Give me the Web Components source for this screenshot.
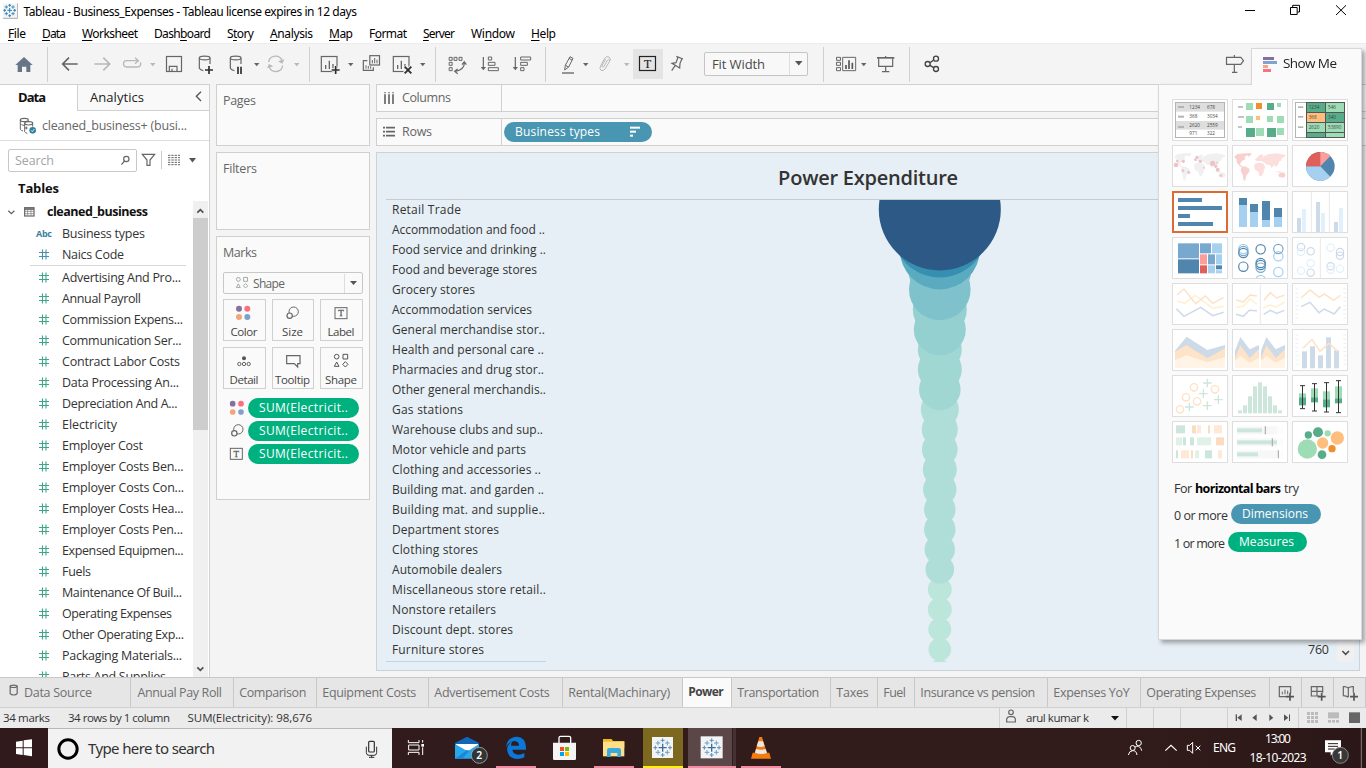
<!DOCTYPE html>
<html lang="en">
<head>
<meta charset="utf-8">
<title>Tableau - Business_Expenses</title>
<style>
html,body{margin:0;height:100%;overflow:hidden;background:#f4f4f4}
body{font-family:"Open Sans","Noto Sans",sans-serif;font-size:12px;color:#333}
</style>
</head>
<body>
<tableau-desktop></tableau-desktop>
<script>
const define = (name, css, html, setup) => customElements.define(name, class extends HTMLElement {
  connectedCallback() {
    if (this.shadowRoot) return;
    const root = this.attachShadow({mode: 'open'});
    root.innerHTML = `<style>*{box-sizing:border-box}svg{display:block;flex:none}${css}</style>` + (typeof html === 'function' ? html(this) : html);
    if (setup) setup(this, root);
  }
});

/* A one-line label that tracks its letters to fill a given width. */
define('fit-text', `:host{display:inline-block;white-space:nowrap;flex:none;line-height:1.3;padding-top:1px}span{display:inline-block;white-space:nowrap}`,
  '<span><slot></slot></span>', (el, root) => {
    const w = parseFloat(el.getAttribute('w'));
    if (!w) return;
    const span = root.querySelector('span');
    const n = el.textContent.length;
    const natural = span.getBoundingClientRect().width;
    el.style.width = w + 'px';
    span.style.letterSpacing = ((w - natural) / Math.max(1, n - 1)).toFixed(3) + 'px';
  });
const T = (w, s, cls = '') => `<fit-text w="${w}" class="${cls}">${s}</fit-text>`;

/* Icons share a grid of three units to one pixel. */
const art = (x, y, w, h, body, cls = '') =>
  `<svg class="${cls}" width="${w}" height="${h}" viewBox="${x} ${y} ${w * 3} ${h * 3}" fill="none" stroke="#666" stroke-width="3.6">${body}</svg>`;
const fill = (c, d) => `<path d="${d}" fill="${c}" stroke="none"/>`;
const box = (x, y, w, h, c) => `<rect x="${x}" y="${y}" width="${w}" height="${h}" fill="${c}" stroke="none"/>`;
const dot = (x, y, r, c) => `<circle cx="${x}" cy="${y}" r="${r}" fill="${c}" stroke="none"/>`;
const ring = (x, y, r, c, s = 3) => `<circle cx="${x}" cy="${y}" r="${r}" stroke="${c}" stroke-width="${s}"/>`;
const line = (d, c = '#666', s = 3.6) => `<path d="${d}" stroke="${c}" stroke-width="${s}"/>`;

const cross = (x, y, s, c) => `<path d="M${x - s} ${y}h${2 * s}M${x} ${y - s}v${2 * s}" stroke="${c}" stroke-width="${s > 8 ? 4 : 3}"/>`;
const tableauMark = (x, y, k) => cross(x, y, 12 * k, '#3b6e9c') +
  cross(x, y - 22 * k, 6 * k, '#5a8fb8') + cross(x, y + 22 * k, 6 * k, '#5a8fb8') +
  cross(x - 22 * k, y, 6 * k, '#5a8fb8') + cross(x + 22 * k, y, 6 * k, '#5a8fb8') +
  [[-1,-1],[1,-1],[-1,1],[1,1]].map(([a, b]) => cross(x + a * 14 * k, y + b * 14 * k, 7 * k, '#6f9fc4')).join('');

define('title-bar', `:host{display:flex;height:23px;background:#fff;align-items:flex-start;color:#000;font:12px "Noto Sans",sans-serif}
  .name{margin:3px 0 0 5.500px;line-height:16px}.sp{flex:1}.logo{margin:3px 0 0 3px}`,
  art(9, 9, 15, 16, box(9, 10, 43, 44, '#f4f4f4') + line('M9 55H53V10', '#aaa', 3) + cross(29, 31, 7, '#2c7fb0') + cross(29, 16, 4, '#2c7fb0') + cross(29, 47, 4, '#2c7fb0') + cross(14, 31, 4, '#2c7fb0') + cross(44, 31, 4, '#2c7fb0') + cross(19, 21, 5, '#3f8fc0') + cross(39, 21, 5, '#3f8fc0') + cross(19, 41, 5, '#3f8fc0') + cross(39, 41, 5, '#3f8fc0'), 'logo') +
  T(333.5, 'Tableau - Business_Expenses - Tableau license expires in 12 days', 'name') + '<span class="sp"></span>' +
  art(210, 0, 146, 22, line('M285 31.5h30', '#000', 3) + line('M421.500 22.500h20v21h-20zM428 22v-6h20.500v20h-6', '#000', 3) + line('M558 16l30 29M588 16l-30 29', '#000', 3)));

define('menu-bar', `:host{display:flex;height:20px;background:#fff;gap:16px;padding:2px 0 0 8px;color:#000;font:12px "Noto Sans",sans-serif}
  u{text-underline-offset:2px}`,
  [[18, '<u>F</u>ile'], [24, '<u>D</u>ata'], [56, '<u>W</u>orksheet'], [57, 'Dash<u>b</u>oard'], [27, 'S<u>t</u>ory'], [43, '<u>A</u>nalysis'], [24, '<u>M</u>ap'], [38, 'F<u>o</u>rmat'], [32, '<u>S</u>erver'], [44, 'Wi<u>n</u>dow'], [25, '<u>H</u>elp']].map(([w, s]) => T(w, s)).join(''));

const G = '#b8b8b8', K = '#2e2e2e';
const cylinder = x => `<ellipse cx="${x}" cy="174" rx="16" ry="5.500"/>` + line(`M${x - 16} 174v31q3 6 12 7M${x + 16} 174v18`);
const sheet = x => `<rect x="${x}" y="169.500" width="47" height="45"/>` + line(`M${x + 13} 207v-12M${x + 24} 207v-25M${x + 35} 207v-15`, '#666', 4);
/* Toolbar items: gap before the item, drawing. */
const tool = (gap, x, body) => art(x, 156, 24, 24, body).replace('<svg', `<svg style="margin:8px 0 0 ${gap}px"`);
const drop = (gap, c = '#666') => `<svg width="9" height="4" style="margin:19px 0 0 ${gap}px"><path d="M2 0h5.500L4.750 3.200z" fill="${c}"/></svg>`;
const bar = gap => `<i style="margin-left:${gap}px"></i>`;

define('tool-bar', `:host{display:flex;height:41px;background:#f4f4f4;border-top:1px solid #ececec;align-items:flex-start}
  i{flex:none;width:1px;height:35px;margin-top:3px;background:#d0d0d0}
  .on{flex:none;margin:5px 0 0 2px;background:#e4e4e4;width:30px;height:30px}
  .fit{flex:none;display:flex;margin:8px 0 0 14px;width:104px;height:24px;border:1px solid #c4c4c4;border-radius:2px;background:#f8f8f8;font-size:13px;color:#4a4a4a;padding:0 0 1px 7px;align-items:center}
  .fit b{width:1px;height:22px;background:#ddd;margin-left:24px}.fit svg{margin-left:5px}`,
  tool(12, 36, fill('#667587', 'M72 171L98 195H91V216H79V200H66V216H53V195H46z')) + bar(11) +
  tool(10, 174, line('M233 192H190M207 173L188 192l19 19', '#666', 5)) +
  tool(8, 270, line('M283 192H327M310 173l19 19-19 19', G, 5)) +
  tool(6, 360, line('M414 182H380a9.500 9.500 0 0 0 0 19H412a9.500 9.500 0 0 0 9-14M405 173l10 9-10 9', G, 4)) + drop(4, G) +
  tool(5, 486, '<rect x="499.500" y="169.500" width="45" height="45"/>' + line('M508 214v-15h23v15M516 206v8')) +
  tool(8, 582, cylinder(614) + line('M627 198v24M615 210h24', K, 5)) +
  tool(6, 672, cylinder(707) + line('M714 200v22M723 200v22', K, 5)) + drop(4) +
  tool(3, 792, line('M806 186a21 21 0 0 1 40-5M848 197a21 21 0 0 1-40 5', G, 4) + fill(G, 'M853 178l-6 13-13-7zM801 205l6-13 13 7z')) + drop(4, G) + bar(8) +
  tool(8, 954, sheet(964) + line('M1007 198v24M995 210h24', '#f4f4f4', 11) + line('M1007 198v24M995 210h24', K, 5)) + drop(4) +
  tool(5, 450, '<rect x="479.500" y="167" width="29" height="28"/>' + line('M472 182H460v29h30v-9') + line('M487 190v-10M494 190v-16M501 190v-11M468 206v-10M475 206v-8M482 206v-7', '#666', 3)) +
  tool(6, 540, sheet(550) + line('M583 199l21 20M604 199l-21 20', '#f4f4f4', 10) + line('M584 200l20 20M604 200l-20 20', K, 5.5)) + drop(4) + bar(8) +
  tool(10, 708, '<path d="M717.500 172h9v9h-9zM732 172h9v9h-9zM747 172h9v9h-9zM717.500 187h9v9h-9zM717.500 203h9v9h-9z" stroke-width="3"/>' + line('M763 189c0 14-10 22-27 25M756 194l7-9 6 9M743 207l-9 7 9 7')) +
  tool(7, 801, line('M820 171v34') + fill('#666', 'M812 201h16l-8 10z') + '<path d="M835 171h10v9h-10zM835 187h20v9h-20zM835 203h30v9h-30z" stroke-width="3"/>') +
  tool(9, 900, line('M916 171v34') + fill('#666', 'M908 201h16l-8 10z') + '<path d="M932 171h30v9h-30zM932 187h20v9h-20zM932 203h10v9h-10z" stroke-width="3"/>') + bar(11) +
  tool(11, 1041, line('M1056 219h36', '#666', 4) + line('M1066 196l14-26 9 5-13 26-12 9zM1066 196l10 5M1077 175l9 5', '#666', 3)) + drop(0) +
  tool(3, -21, line('M13 198l9-17q3-4 6-1q2 3-1 7L15 207q-5 7-12 4q-6-5-1-13L14 175q6-8 13-4q7 5 2 13M13 198q-3 5-6 3q-2-2 0-6l10-18', G, 3)) + drop(5, G) +
  art(99, 147, 30, 30, '<rect x="118.500" y="169.500" width="48" height="42" stroke="#222"/><text x="142.500" y="203" text-anchor="middle" font-family="Liberation Serif,serif" font-size="35" fill="#222" stroke="#222" stroke-width=".6">T</text>', 'on') +
  tool(3, 198, line('M229 169l20 8M234 172l-6 16-12 2 23 14 1-14 6-14M226 196l-11 16')) +
  '<div class="fit">' + T(53, 'Fit Width') + '<b></b>' + `<svg width="8" height="5"><path d="M0 0h7.500L3.750 4.500z" fill="#555"/></svg></div>` + bar(15) +
  tool(10, 702, '<path d="M709.500 172h12v9h-12zM709.500 187h12v9h-12zM709.500 203h12v9h-12zM728 172h39v40h-39z" stroke-width="3"/>' + line('M738 207v-12M747 207v-26M757 207v-19', '#555', 5)) + drop(1) +
  tool(6, 822, line('M831 173.500h52', '#666', 5) + line('M857 168v5M836 175v24h42v-24M857 199v16M846 215h22')) + bar(11) +
  tool(10, 960, ring(983, 192, 7.5, '#444', 4) + ring(1008, 176, 7.5, '#444', 4) + ring(1008, 207, 7.5, '#444', 4) + line('M990 188l11-8M990 196l11 7', '#444', 4)) +
  tool(279, 219, line('M229.500 172h43l8 10-8 11h-43zM253 165v7M253 193v24M246 217h16')));

const hash = c => `<svg width="10" height="11" viewBox="0 0 10 11" stroke="${c}" stroke-width="1.1"><path d="M3.500 .5v10M7 .5v10M0 3.500h10M0 7.500h10"/></svg>`;
define('field-row', `:host{display:flex;height:21px;align-items:center;padding-left:39px;color:#333;font-size:12.500px}
  .i{width:23px;display:flex;flex:none}.abc{color:#3d7f9f;font-size:9px;font-weight:700;margin-left:-3px;width:26px}`,
  el => (el.getAttribute('kind') === 'abc' ? `<span class="i abc">${T(16, 'Abc')}</span>` : `<span class="i">${hash(el.getAttribute('kind') === 'dim' ? '#4a8fa8' : '#3fa58a')}</span>`) +
    T(el.getAttribute('w'), el.getAttribute('label')));

const fields = [['Advertising And Pro...', 119], ['Annual Payroll', 79], ['Commission Expens...', 121], ['Communication Ser...', 119.5], ['Contract Labor Costs', 118], ['Data Processing An...', 117], ['Depreciation And A...', 115.5], ['Electricity', 55], ['Employer Cost', 81], ['Employer Costs Ben...', 121.5], ['Employer Costs Con...', 122], ['Employer Costs Hea...', 121.5], ['Employer Costs Pen...', 121], ['Expensed Equipmen...', 121.5], ['Fuels', 29], ['Maintenance Of Buil...', 120], ['Operating Expenses', 110], ['Other Operating Exp...', 122], ['Packaging Materials...', 120], ['Parts And Supplies', 104]];
define('data-pane', `:host{display:flex;flex-direction:column;width:210px;background:#fff;border-right:1px solid #d0d0d0;border-top:1px solid #d0d0d0;overflow:hidden;flex:none}
  .tabs{display:flex;height:26px;font-size:13px;flex:none;color:#222}.d{width:77px;padding:3px 0 0 18px;font-weight:700;font-size:13px;color:#111}
  .a{flex:1;background:#f9f9f9;border-left:1px solid #d0d0d0;border-bottom:1px solid #d0d0d0;padding:3px 0 0 12px;display:flex}.a svg{margin:3px 0 0 50px}
  .src{display:flex;height:30px;border-bottom:1px solid #ddd;align-items:center;padding-left:19px;font-size:12.500px;color:#666;flex:none}.src svg{margin-right:6px}
  .find{display:flex;height:40px;flex:none;align-items:center;padding:0 0 2px 8px}
  .q{display:flex;width:129px;height:23px;border:1px solid #c8c8c8;border-radius:2px;align-items:center;padding:1px 0 0 6px;color:#a4a4a4;font-size:12.500px}.q svg{margin-left:66px}
  h4{margin:0;height:20px;padding:0 0 0 18px;font-size:13px;line-height:12px;color:#111;flex:none}h4 fit-text{line-height:12px}
  .tree{display:flex;flex:1;min-height:0}.list{flex:1;overflow:hidden;min-width:0}
  .root{display:flex;height:21px;align-items:center;padding-left:7px;font-weight:700;font-size:12.500px;color:#111}
  hr{border:0;border-top:1px solid #d8d8d8;margin:0 7px 0 30px}
  .sb{width:15px;margin-right:1px;background:#f0f0f0;display:flex;flex-direction:column;flex:none}.sb p{margin:0;height:212px;background:#cdcdcd}.sb s{flex:1}`,
  `<div class="tabs"><div class="d">${T(28, 'Data')}</div><div class="a">${T(54, 'Analytics')}${art(583, 275, 8, 11, line('M604 277l-14 14 14 14', '#555', 4))}</div></div>
  <div class="src">${art(57, 348, 17, 18, '<ellipse cx="73" cy="357" rx="12" ry="5"/><ellipse cx="86" cy="367" rx="12" ry="5"/>' + line('M61 357v28q3 4 8 5M74 367v25q2 4 8 5M98 367v10M64 370q4 4 9 3M75 381h8M79 377v8', '#666', 3) + dot(98, 388, 10, '#2f7f9f') + line('M93 388l4 4 6-8', '#fff', 2.5))}${T(145, 'cleaned_business+ (busi...')}</div>
  <div class="find"><div class="q">${T(39, 'Search')}${art(360, 465, 12, 11, ring(379, 477, 8, '#666', 3.6) + line('M374 483l-10 11'))}</div>
    ${art(423, 459, 17, 14, line('M427 463h37l-14 17v16h-9v-16z')).replace('<svg', '<svg style="margin-left:4px"')}
    <span style="width:1px;height:18px;background:#ccc;margin-left:3px"></span>
    ${art(504, 462, 13, 12, '<path d="M504 466h36M504 473h36M504 480h36M504 487h36M504 494h36" stroke-dasharray="7 3" stroke-width="3"/>').replace('<svg', '<svg style="margin-left:6px"')}
    <svg width="8" height="5" style="margin-left:8px"><path d="M0 0h7L3.500 4.500z" fill="#555"/></svg></div>
  <h4>${T(41, 'Tables')}</h4>
  <div class="tree"><div class="list">
    <div class="root">${art(21, 248, 9, 10, line('M25 256l9 9 9-9', '#666', 4)).replace('<svg', '<svg style="margin-top:2px"')}${art(72, 242, 11, 10, '<rect x="74" y="244" width="28" height="25"/>' + line('M74 248h28', '#666', 5) + line('M74 255h28M74 262h28M83 246v22M93 246v22', '#777', 2)).replace('<svg', '<svg style="margin:1px 12px 0 8px"')}${T(101, 'cleaned_business')}</div>
    <div style="height:1px"></div>
    <field-row kind="abc" w="83" label="Business types"></field-row><field-row kind="dim" w="62" label="Naics Code"></field-row><hr><div style="height:1px"></div>
    ${fields.map(([l, w]) => `<field-row w="${w}" label="${l}"></field-row>`).join('')}
  </div><div class="sb">${art(579, 227, 15, 17, line('M592 262l9-9 9 9', '#505050', 5))}<p></p><s></s>${art(579, 690, 15, 17, line('M592 712l9 9 9-9', '#505050', 5))}</div></div>`);

const four = (x, y, d = 25, r = 9) => dot(x, y, r, '#84709b') + dot(x + d, y, r, '#fb6f83') + dot(x, y + d, r, '#f2a57c') + dot(x + d, y + d, r, '#7fa0cc');
const four2 = ring(0, 0, 7, '#555', 3) + '<path d="M19-7h14v14h-14z" stroke="#555" stroke-width="3"/><path d="M0 16l7 13h-14zM26 15l8 8-8 8-8-8z" stroke="#555" stroke-width="3"/>';
const sizeIcon = (x, y) => ring(x, y, 14, '#666') + `<circle cx="${x - 12}" cy="${y + 12}" r="8" fill="#fafafa"/>`;
const labelIcon = (x, y, s = 36) => `<rect x="${x}" y="${y}" width="${s}" height="33" stroke-width="3"/><text x="${x + s / 2}" y="${y + 26}" text-anchor="middle" font-family="Liberation Serif,serif" font-size="27" fill="#555" stroke="#555" stroke-width=".8">T</text>`;
define('mark-button', `:host{display:flex;flex-direction:column;align-items:center;height:42px;border:1px solid #d0d0d0;background:#fafafa;font-size:11.500px;color:#444;padding-right:1px}svg{margin-top:3px}fit-text{margin-top:1px}`,
  el => ({
    Color: art(-19, -16, 22, 20, four(-1, 1)), Size: art(-31, -30, 22, 20, sizeIcon(4, -4)), Label: art(-33, -30, 22, 20, labelIcon(-18, -16)),
    Detail: art(-33, -30, 22, 20, dot(0, -8, 6, '#555') + ring(-14, 9, 5, '#666') + ring(0, 9, 5, '#666') + ring(14, 9, 5, '#666')),
    Tooltip: art(-34, -30, 22, 20, line('M-20-16h40v24h-7v10l-10-10h-23z')), Shape: art(-20, -17, 22, 20, four2)
  })[el.getAttribute('label')] + T(el.getAttribute('w'), el.getAttribute('label')));

define('field-pill', `:host{display:flex;align-items:center;height:20px;border-radius:10px;color:#fff;font-size:12px;font-weight:500;padding:0 11px 1px;background:var(--pill,#00b180)}`, '<slot></slot>');

define('shelf-card', `:host{display:block;background:#fafafa;border:1px solid #d0d0d0;padding:6px 6px 0;color:#666;font-size:12.500px}fit-text{line-height:17px;height:18px;display:block}`,
  el => T(el.getAttribute('w'), el.getAttribute('label')) + '<slot></slot>');

define('card-column', `:host{display:flex;flex-direction:column;gap:6px;width:154px;margin-left:6px;flex:none}
  .shape{display:flex;height:22px;border:1px solid #c8c8c8;border-radius:2px;margin-top:11px;align-items:center;font-size:12px;color:#666;padding-left:11px;width:140px}
  .shape b{height:19px;width:1px;background:#ddd;margin:0 5px 0 59px}
  .grid{display:grid;grid-template-columns:43px 42px 43px;gap:6px;margin-top:5px}
  .row{display:flex;height:20px;align-items:center;margin-top:3px;padding-left:4px}.row field-pill{width:111px;margin-left:-1px}
  .pills{padding-top:6px}`,
  `<shelf-card style="height:62px" w="33" label="Pages"></shelf-card><shelf-card style="height:78px" w="34" label="Filters"></shelf-card>
  <shelf-card style="height:264px" w="34" label="Marks">
   <div class="shape">${art(-10, -10, 15, 14, four2.replace(/#555/g, '#999')).replace('viewBox="-10 -10 45 42"', 'viewBox="-12 -12 54 50"')}<span style="width:3px"></span>${T(32, 'Shape')}<b></b><svg width="7" height="5"><path d="M0 0h7L3.500 4z" fill="#555"/></svg></div>
   <div class="grid"><mark-button label="Color" w="27"></mark-button><mark-button label="Size" w="21"></mark-button><mark-button label="Label" w="27"></mark-button><mark-button label="Detail" w="29"></mark-button><mark-button label="Tooltip" w="35"></mark-button><mark-button label="Shape" w="32"></mark-button></div>
   <div class="pills">${[art(681, 624, 22, 20, four(698, 641, 25, 8.5)), art(681, 693, 22, 20, sizeIcon(715, 718)), art(681, 42, 22, 20, labelIcon(691, 55))].map(s => `<div class="row">${s}<field-pill>${T(89, 'SUM(Electricit..')}</field-pill></div>`).join('')}</div>
  </shelf-card>`);

define('shelf-row', `:host{display:flex;height:28px;border:1px solid #d0d0d0;border-right:0;background:#fafafa;align-items:center;color:#666;font-size:12.500px}
  .h{width:125px;height:100%;border-right:1px solid #d0d0d0;display:flex;align-items:center;padding-left:6px}.h svg{margin-right:7px}slot{display:contents}`,
  el => `<div class="h">${el.getAttribute('label') === 'Columns' ? art(519, 272, 12, 12, line('M525 273v3M537 273v3M549 273v3M525 279v30M537 279v30M549 279v30', '#666', 5)) : art(519, 376, 12, 12, line('M519 381h6M528 381h27M519 393h6M528 393h27M519 405h6M528 405h27', '#666', 5))}${T(el.getAttribute('w'), el.getAttribute('label'))}</div><slot></slot>`);

const rows = [['Retail Trade', 69], ['Accommodation and food ..', 153], ['Food service and drinking ..', 154], ['Food and beverage stores', 145], ['Grocery stores', 83], ['Accommodation services', 140], ['General merchandise stor..', 153], ['Health and personal care ..', 152], ['Pharmacies and drug stor..', 152], ['Other general merchandis..', 154], ['Gas stations', 71], ['Warehouse clubs and sup..', 151], ['Motor vehicle and parts', 134], ['Clothing and accessories ..', 149], ['Building mat. and garden ..', 152], ['Building mat. and supplie..', 153], ['Department stores', 107], ['Clothing stores', 86], ['Automobile dealers', 110], ['Miscellaneous store retail..', 154], ['Nonstore retailers', 104], ['Discount dept. stores', 121], ['Furniture stores', 92]];
/* Radius and colour of each mark, largest first; smaller marks lie beneath. */
const marks = [[61, '#2c5985'], [48, '#368eb1'], [40, '#5aabc0'], [31.5, '#7fc2cc'], [30.8, '#7fc2cc'], [27, '#95d0d1'], [26, '#95d0d1'], [22, '#a1d7d3'], [22, '#a1d7d3'], [20.8, '#a1d7d3'], [19, '#afddd8'], [18, '#afddd8'], [17.8, '#afddd8'], [17, '#afddd8'], [16.7, '#afddd8'], [15.7, '#afddd8'], [15.7, '#afddd8'], [15.2, '#afddd8'], [14.3, '#afddd8'], [12, '#bce6da'], [12, '#bce6da'], [11.5, '#bce6da'], [11.3, '#bce6da'], [10.5, '#bce6da']];
define('viz-sheet', `:host{display:flex;flex-direction:column;height:519px;width:984px;background:#e6eff5;border:1px solid #ccd3d8;padding:0 9px;color:#333}
  h1{margin:0;height:46px;text-align:center;font:600 20px/50px "Open Sans",sans-serif}
  .body{display:flex;border-top:1px solid #c4cdd2;height:463px}
  .names{width:160px;border-bottom:1px solid #c0d4e2;padding-left:6px}.names div{height:20px;display:flex;align-items:center;padding-bottom:1px}
  .plot{flex:1}.val{align-self:flex-end;margin:0 8px 4px 0;font-size:12.500px}`,
  `<h1>${T(180, 'Power Expenditure')}</h1><div class="body"><div class="names">${rows.map(([s, w]) => `<div>${T(w, s)}</div>`).join('')}</div>
  <svg class="plot" height="462">${marks.map(([r, c], i) => `<circle cx="393.800" cy="${9.4 + 20 * i}" r="${r}" fill="${c}"/>`).reverse().join('')}</svg>
  <div class="val">${T(21, '760')}</div>${art(561, 525, 17, 21, line('M577 555l10 10 10-10', '#505050', 5)).replace('<svg', '<svg style="align-self:flex-end;background:#f0f0f0;margin-right:-4px;flex:none"')}</div>`);

/* Thumbnails of the chart types. */
const land = (dx, c1, c2) => `<g transform="translate(${dx} 0)">` + fill(c1, 'M252 471l10-9 20-2 12 1-4 7-8 3 5 6-11 6-6 8 4 6 8 5-2 2-11-6-8-10-2-10zM290 460l15-1-4 8-6 3zM275 500l10-1 14 8-2 10-8 9-3 14-5 3-3-19-6-11zM384 524l8-6 10-1 5 9-5 7-14-2z') +
  fill(c2, 'M317 482l-2-5 6-3 6-8 10-3 3 5-3 6 1 8-8 1zM314 492l11-4 14 2 7 11-3 7-3 10-6 11-5 0-4-14-10-6-3-9zM335 484l5-14 14-7 26-3 26 5-2 6-8 3-3 8-5 2-4 10-6 7-6-6-7 9-6-10-8 1-7-7zM375 512l10 3 6-2 2 5-8 0z') + '</g>';
const poly = (c, pts) => `<polygon points="${pts}" fill="${c}" stroke="none"/>`;
const wave = (c, pts) => `<polyline points="${pts}" stroke="${c}" stroke-width="4.500"/>`;
const num = (x, y, s) => `<text x="${x}" y="${y}" font-family="Open Sans,sans-serif" font-size="16" fill="#444" stroke="none" textLength="${s.length * 8}" lengthAdjust="spacingAndGlyphs">${s}</text>`;
const O = '#fde2c6', Y = '#fff0cf', B = '#cddae8', LG = '#cde6dc', g1 = '#57ad89', g2 = '#9edcb5';
const ticks = (x, a, b) => { let s = ''; for (let y = a; y <= b; y += 12.5) s += `M${x} ${y}h9`; return line(s, '#eee', 3); };
const thumbs = [
  box(75, 306, 150, 108, '#b4b4b4') + box(78, 309, 144, 102, '#fff') + box(78, 309, 144, 26, '#dedede') + box(78, 363, 144, 26, '#dedede') + [321, 350, 381].map(y => box(84, y - 3, 18, 6, '#b4b4b4')).join('') + num(118, 328, '1234') + num(171, 328, '678') + num(118, 355, '368') + num(171, 355, '3034') + num(118, 382, '2620') + num(171, 382, '2559') + num(118, 406, '971') + num(171, 406, '322'),
  box(264, 318, 15, 6, '#c4c4c4') + box(264, 348, 18, 6, '#c4c4c4') + box(264, 378, 12, 6, '#c4c4c4') + box(288, 309, 21, 21, g2) + box(318, 309, 18, 18, '#f28e2b') + box(351, 309, 21, 21, g1) + box(381, 309, 12, 12, g2) + box(288, 348, 21, 21, g2) + box(318, 348, 12, 12, '#ffbe7d') + box(351, 348, 18, 18, g2) + box(381, 348, 21, 21, g2) + box(288, 384, 27, 27, g1) + box(318, 384, 24, 24, g2) + box(351, 384, 27, 27, g1) + box(381, 384, 21, 21, g2),
  box(435, 306, 150, 108, '#b4b4b4') + box(438, 309, 144, 102, '#fff') + box(468, 306, 117, 108, '#555') + [321, 350, 381].map(y => box(444, y - 2, 16, 5, '#b4b4b4')).join('') + box(471, 309, 54, 27, g1) + box(528, 309, 54, 27, g2) + box(471, 339, 54, 27, '#ffbe7d') + box(528, 339, 54, 27, g1) + box(471, 369, 54, 27, g2) + box(528, 369, 54, 27, g2) + box(471, 399, 54, 12, g1) + box(528, 399, 54, 12, g2) + num(476, 327, '1234') + num(534, 327, '546') + num(476, 358, '368') + num(534, 358, '340') + num(476, 388, '2620') + num(534, 388, '53890'),
  land(-180, '#f0f0f0', '#f0f0f0') + [[78, 495, 7], [82, 483, 4], [100, 484, 5], [141, 472, 5], [136, 479, 4], [151, 484, 5], [188, 490, 8], [197, 499, 5], [203, 509, 6], [116, 517, 5], [99, 512, 4], [213, 527, 4], [162, 503, 3], [201, 488, 3]].map(([x, y, r]) => dot(x, y, r, '#edc3c8')).join(''),
  land(0, '#f8d0cd', '#fcdedd'),
  dot(511, 499, 43, '#5085ae') + fill('#a5d0f0', 'M511 499H468A43 43 0 0 0 541 530z') + fill('#e15f59', 'M511 499V456A43 43 0 0 0 468 499z') + fill('#ff9d9a', 'M511 499V456A43 43 0 0 1 541 468z'),
  box(84, 594, 72, 12, '#5085ae') + box(84, 618, 132, 12, '#5085ae') + box(84, 642, 36, 12, '#5085ae') + box(84, 666, 105, 12, '#5085ae'),
  box(267, 594, 24, 87, '#a5d0f0') + box(300, 612, 24, 69, '#a5d0f0') + box(336, 603, 24, 78, '#a5d0f0') + box(372, 624, 24, 57, '#a5d0f0') + box(267, 594, 24, 21, '#5085ae') + box(300, 612, 24, 24, '#5085ae') + box(336, 603, 24, 57, '#5085ae') + box(372, 624, 24, 27, '#5085ae'),
  line('M484 576v120M538 576v120', '#e8e8e8', 3) + box(441, 654, 12, 42, B) + box(456, 627, 12, 69, '#e2f0fb') + box(498, 606, 12, 90, B) + box(513, 639, 12, 57, '#e2f0fb') + box(552, 666, 12, 30, B) + box(567, 624, 12, 72, '#e2f0fb'),
  box(84, 39, 63, 45, '#79a8ce') + box(84, 87, 63, 42, '#5085ae') + box(150, 39, 33, 30, '#79a8ce') + box(186, 39, 30, 30, '#a5d0f0') + box(150, 72, 21, 30, '#ff9d9a') + box(174, 72, 21, 30, '#79a8ce') + box(198, 72, 18, 30, '#a5d0f0') + box(150, 105, 21, 24, '#e15f59') + box(174, 105, 21, 24, '#a5d0f0') + box(198, 105, 18, 12, '#5085ae') + box(198, 120, 18, 9, '#a5d0f0'),
  [[280, 56, '#a5d0f0'], [280, 68, '#5085ae'], [280, 62, '#79a8ce'], [280, 109, '#5085ae'], [332, 57, '#5085ae'], [332, 98, '#5085ae'], [332, 104, '#5085ae'], [332, 112, '#79a8ce'], [332, 149, '#a5d0f0'], [385, 78, '#a5d0f0'], [385, 56, '#79a8ce'], [385, 125, '#a5d0f0']].map(([x, y, c]) => ring(x, y, 14, c, 3.6)).join(''),
  line('M511 24v120', '#e8e8e8', 3) + [[453, 50, B], [453, 65, '#e2f0fb'], [482, 63, B], [482, 99, '#e2f0fb'], [453, 121, '#e2f0fb'], [482, 127, B], [542, 52, '#e2f0fb'], [570, 65, B], [570, 76, B], [542, 108, B], [542, 118, '#e2f0fb'], [570, 115, '#e2f0fb']].map(([x, y, c]) => ring(x, y, 11, c, 3.6)).join(''),
  wave(Y, '81,212 103,219 136,195 189,234 221,228') + wave(O, '81,194 102,176 137,220 166,197 188,219 221,202') + wave(B, '79,235 102,258 152,231 188,256 221,246'),
  line('M331 162v120', '#e8e8e8', 3) + wave(O, '258,209 280,215 300,194 321,197') + wave(Y, '258,231 280,228 300,206 320,221') + wave(B, '258,252 280,258 298,240 321,241') + wave(O, '342,210 361,187 380,203 403,195') + wave(Y, '339,233 361,224 380,230 403,215') + wave(B, '341,252 361,240 380,249 403,240'),
  ticks(436, 176, 264) + ticks(580, 176, 264) + wave(O, '453,203 480,179 507,201 523,191 551,210 571,195') + wave(B, '453,229 480,216 507,247 523,236 552,251 571,229'),
  poly(B, '75,361 110,319 172,359 225,344 225,413 75,413') + poly('#fde3c8', '75,364 109,344 172,384 225,354 225,413 75,413') + poly('#fff4e6', '75,390 109,375 172,396 225,381 225,413 75,413'),
  [[255, 0], [333, 0]].map(([x]) => `<g transform="translate(${x} 0)">` + poly(B, '0,361 16,320 44,357 72,344 72,413 0,413') + poly('#fde3c8', '0,384 16,345 44,383 72,357 72,413 0,413') + poly('#fff4e6', '0,393 16,376 44,397 72,383 72,413 0,413') + '</g>').join(''),
  ticks(436, 314, 402) + ticks(580, 314, 402) + box(456, 363, 15, 51, B) + box(480, 348, 15, 66, B) + box(504, 375, 15, 39, B) + box(528, 321, 15, 93, B) + box(552, 360, 15, 54, B) + wave(O, '459,354 486,327 510,363 537,339 563,363'),
  [[132, 471], [195, 477], [108, 501], [141, 513], [90, 537]].map(([x, y]) => ring(x, y, 11, O, 4)).join('') + [[172, 458], [160, 490], [205, 508], [118, 530], [172, 526]].map(([x, y]) => cross(x, y, 13, LG)).join(''),
  [[264, 540], [279, 525], [294, 498], [309, 468], [324, 456], [339, 468], [354, 498], [369, 525], [384, 540]].map(([x, y]) => box(x, y, 12, 549 - y, LG)).join(''),
  [[447, 489, 501, 525, 466, 535], [483, 474, 501, 516, 460, 542], [519, 483, 507, 531, 457, 545], [555, 468, 504, 519, 451, 547]].map(([x, a, m, b, t, u]) => box(x, a, 21, m - a, g2) + box(x, m, 21, b - m, g1) + line(`M${x + 10.5} ${t}V${u}M${x + 3} ${t}h15M${x + 3} ${u}h15`, '#333', 3)).join(''),
  [[78, 585, 27, LG], [126, 585, 12, '#fbdcc0'], [141, 585, 12, '#fde9d5'], [174, 585, 6, '#fbdcc0'], [192, 585, 24, '#fde9d5'], [78, 621, 18, '#e0f2e8'], [99, 621, 9, LG], [120, 621, 12, LG], [141, 621, 42, '#e0f2e8'], [198, 621, 24, '#fbdcc0'], [78, 660, 6, LG], [93, 660, 24, '#fde9d5'], [123, 660, 6, '#fbdcc0'], [135, 660, 12, '#e0f2e8'], [165, 660, 21, LG], [204, 660, 12, '#fde9d5']].map(([x, y, w, c]) => box(x, y, w, 24, c)).join(''),
  [588, 624, 660].map(y => box(261, y, 120, 24, '#f7f7f7') + box(381, y, 18, 24, '#fcfcfc')).join('') + box(261, 594, 75, 12, LG) + box(261, 630, 120, 12, LG) + box(261, 666, 63, 12, LG) + line('M346 588v24M367 624v24M385 660v24', '#aaa', 3.5),
  dot(472, 656, 29, g2) + dot(475, 614, 11, g1) + dot(504, 606, 15, g1) + dot(533, 609, 9.5, g2) + dot(562, 623, 20, '#ffbe7d') + dot(518, 638, 17, '#ffbe7d') + dot(546, 655, 11, '#f28e2b') + dot(516, 673, 13, g1)
];
define('show-me', `:host{display:flex;flex-direction:column;width:204px;height:592px;filter:drop-shadow(3px 3px 2px rgba(0,0,0,.32))}
  .tab{align-self:flex-end;width:111px;height:37px;background:#fafafa;border:1px solid #d8d8d8;border-bottom:0;display:flex;padding:5px 0 0 11px;font-size:13.500px;color:#222;z-index:1}
  .tab svg{margin-right:6px;margin-top:2px}
  .body{flex:1;background:#fafafa;border:1px solid #d8d8d8;margin-top:-1px;padding:14px 0 0 13px;font-size:12.500px;color:#333}
  .g{display:grid;grid-template-columns:repeat(3,56px);grid-auto-rows:42px;gap:4px}.g svg{border:1px solid #dedede;background:#fff}.g .sel{border:2px solid #dc6a35}
  p{display:flex;margin:0 0 0 2px;height:28px;align-items:center;gap:3px}b{color:#000}`,
  `<div class="tab">${art(339, 165, 14, 17, box(339, 168, 33, 9, '#876f9c') + box(339, 180, 42, 9, '#7fa4cf') + box(339, 192, 15, 9, '#f4a582') + box(339, 204, 24, 9, '#fa7183'))}${T(54, 'Show Me')}</div>
  <div class="body"><div class="g">${thumbs.map((s, i) => { const r = Math.floor(i / 3), x = 66 + 180 * (i % 3), y = r < 3 ? 297 + 138 * r : 20 + 138 * (r - 3); const b = i === 6 ? 2 : 1; return `<svg class="${i === 6 ? 'sel' : ''}" width="56" height="42" viewBox="${x + b * 3} ${y + b * 3} ${168 - b * 6} ${126 - b * 6}" fill="none" stroke="#666">${s}</svg>`; }).join('')}</div>
  <p style="margin-top:12px">${T(18, 'For')}<b>${T(86, 'horizontal bars')}</b>${T(15, 'try')}</p>
  <p style="margin-top:-1px">${T(54, '0 or more')}<field-pill style="--pill:#4996b2;width:90px;margin-top:-5px">${T(66, 'Dimensions')}</field-pill></p>
  <p>${T(51, '1 or more')}<field-pill style="width:79px;margin-top:-5px">${T(55, 'Measures')}</field-pill></p></div>`);

const tabs = [['Annual Pay Roll', 84.5, 103], ['Comparison', 67, 83], ['Equipment Costs', 94, 112], ['Advertisement Costs', 115.5, 134], ['Rental(Machinary)', 102, 120], ['Power', 35.5, 49], ['Transportation', 82, 99], ['Taxes', 32.5, 47], ['Fuel', 22.5, 37], ['Insurance vs pension', 115, 133], ['Expenses YoY', 76.5, 93], ['Operating Expenses', 110, 129]];
define('sheet-tabs', `:host{display:flex;height:31px;border-top:1px solid #c8c8c8;border-bottom:1px solid #d0d0d0;background:#e6e6e6;color:#707070;font-size:12.500px}
  div{display:flex;align-items:center;border-right:1px solid #c8c8c8;padding:1px 0 0 5.300px;flex:none}
  .on{background:#fafafa;font-weight:700;color:#444;padding-top:0;padding-bottom:2px;font-size:12px}svg{flex:none}.n{padding:0}`,
  `<div style="width:131px;padding-left:9px">${art(27, 60, 15, 14, '<ellipse cx="41" cy="67" rx="10.500" ry="3.500"/>' + line('M30.500 67v22q3 4 10.500 4t10.500-4v-22')).replace('<svg', '<svg style="margin-top:-4px"')}${T(68, 'Data Source')}</div>` +
  tabs.map(([s, w, full], i) => `<div class="${s === 'Power' ? 'on' : ''}" style="width:${full}px;${i ? '' : 'padding-left:6.500px'}">${T(w, s)}</div>`).join('') +
  [[1092, 32, '<path d="M1154 86V66h-34v30h24"/>' + line('M1129 89v-8M1137 89v-14M1145 89v-11', '#666', 3) + line('M1152 84v24M1140 96h24', '#555', 5)], [1188, 32, '<path d="M1250 84V66h-34v28h24M1216 80h34M1233 66v28"/>' + line('M1247 84v24M1235 96h24', '#555', 5)], [1284, 32, '<path d="M1327 98v-28q-6-5-15-4v27q9 0 15 5M1327 70q6-5 15-4v18"/>' + line('M1344 84v24M1332 96h24', '#555', 5)]].map(([x, w, d]) => `<div class="n" style="width:${w}px">${art(x, 40, 31, 29, d)}</div>`).join(''));

define('status-bar', `:host{display:flex;height:20px;background:#ebebeb;color:#333;font-size:11.500px;align-items:center;padding-left:3px}
  div{display:flex;align-items:center;height:100%;border-left:1px solid #d0d0d0;flex:none}`,
  T(47, '34 marks') + '<span style="width:18px"></span>' + T(102, '34 rows by 1 column') + '<span style="width:17.500px"></span>' + T(124.500, 'SUM(Electricity): 98,676') +
  `<div style="width:127px;margin-left:687px">${art(282, 129, 22, 20, '<circle cx="315" cy="142" r="7"/><path d="M302 171v-10q3-6 9-6h8q7 0 9 6v10z"/>')}<span style="width:4px"></span>${T(63, 'arul kumar k')}<svg width="9" height="5" style="margin-left:22px"><path d="M0 0h8L4 4.500z" fill="#111"/></svg></div><div style="width:27px"></div><div style="width:27px"></div><div style="width:47px"></div>
  <div style="width:71px">${art(966, 129, 69, 20, box(989, 148, 4, 20, '#555') + fill('#555', 'M1007 148v20l-13-10zM1052 148v20l-13-10zM1090 148v20l12-10zM1134 148v20l13-10z') + box(1149, 148, 3, 20, '#555'))}</div>
  <div style="width:67px">${art(1179, 129, 65, 20, [0, 12, 24].map(y => [0, 12, 24].map(x => box(1203 + x, 141 + y, 9, 9, '#bbb')).join('')).join('') + box(1266, 142, 33, 18, '#bbb') + box(1266, 165, 9, 8, '#bbb') + box(1278, 165, 9, 8, '#bbb') + box(1290, 165, 9, 8, '#bbb') + box(1329, 142, 33, 32, '#666'))}</div>`);

const W = '#fff';
const taskIcon = (x0, x1, body, off = 450) => art((x0 - off) * 3, 189, x1 - x0, 40, body);
define('task-bar', `:host{display:flex;height:40px;background:linear-gradient(90deg,#301a1c,#321c1b 80%,#2c1718);color:#fff;font-family:"Noto Sans",sans-serif}
  .s{display:flex;width:344px;background:#f2f2f2;color:#333;font-size:15px;align-items:center;flex:none;border-top:1px solid #b8b8b8}
  .sp{flex:1}.eng{font-size:12px;margin:11px 14px 0 0}.clock{display:flex;flex-direction:column;align-items:center;width:58px;margin:0 2px 0 -1px;font-size:12px;padding-top:2px;gap:2px}text{font-family:"Noto Sans",sans-serif}`,
  taskIcon(0, 48, fill(W, 'M48 230l20-3v20H48zM71 226l25-3v24H71zM48 250h20v20l-20-3zM71 250h25v24l-25-4z'), 0) +
  `<div class="s">${art(144, 189, 40, 38, ring(204, 246, 27.5, '#000', 9))}${T(127, 'Type here to search')}${art(1071, 189, 35, 38, '<rect x="1106" y="223" width="17" height="32" rx="3" stroke="#333"/>' + line('M1099 239v18q0 8 8 8h15q8 0 8-8v-18M1115 265v8M1107 271h16', '#333', 3)).replace('<svg', '<svg style="margin-left:142px"')}</div>` +
  taskIcon(392, 440, line('M1225 225v8h32v-8M1225 270v-8h32v8M1226 240h31v15h-31zM1268 225v8M1268 247v23', W, 3) + box(1264, 237, 8, 8, W), 0) +
  taskIcon(440, 492, fill('#1066b8', 'M15 234l36-19 36 19v10H15z') + fill('#fff', 'M18 237h66v20H18z') + fill('#28a8ea', 'M15 237l38 22 34-22v44H15z') + fill('#1e86d8', 'M15 281l36-26 6 4-20 22z') + '<circle cx="88" cy="271" r="24" fill="#303638" stroke="#aaa" stroke-width="2.500"/><text x="88" y="282" font-size="31" font-weight="600" text-anchor="middle" fill="#fff" stroke="none">2</text>') +
  taskIcon(492, 541, fill('#0a78d8', 'M168 246q4-30 34-31 26 3 26 33v6h-41q2 14 18 15 10 0 18-5v13q-9 5-22 5-28-2-30-29 1-17 17-24-5 5-5 13h24q0-13-14-14-15 0-25 18z') + box(138, 303, 120, 6, '#f58ba0')) +
  taskIcon(541, 590, line('M327 235v-17q0-4 5-4h25q5 0 5 4v17', W, 4) + fill('#f4f4f4', 'M309 233h69v48q0 4-4 4h-61q-4 0-4-4z') + box(330, 246, 12, 12, '#f25022') + box(345, 246, 12, 12, '#7fba00') + box(330, 261, 12, 12, '#00a4ef') + box(345, 261, 12, 12, '#ffb900')) +
  taskIcon(590, 643, fill('#f2b91c', 'M459 222h26l4 6h34v20h-64z') + box(459, 230, 64, 44, '#ffe08a') + fill('#3aa9e0', 'M471 276v-20q0-7 7-7h28q7 0 7 7v20h-11v-12h-20v12z') + box(432, 303, 120, 6, '#f58ba0')) +
  taskIcon(643, 688, box(579, 189, 120, 120, '#7c681f') + box(579, 303, 120, 6, '#fff000') + box(606, 216, 63, 63, '#f2f4f6') + tableauMark(638, 248, 1)) +
  taskIcon(688, 738, box(714, 189, 132, 120, '#5b4648') + box(849, 189, 9, 120, '#463234') + box(714, 303, 144, 6, '#f58ba0') + box(752, 214, 66, 66, '#f2f4f6') + tableauMark(785, 248, 1)) +
  taskIcon(738, 784, fill('#f47b0c', 'M903 281l5-18h50l5 18zM928 216h8l15 49q-18 8-37 0z') + fill('#e8e8e8', 'M925 229h14l5 15q-12 4-24 0zM918 252q14 5 29 0l4 11q-18 8-36 0z') + box(873, 303, 120, 6, '#f58ba0')) +
  '<span class="sp"></span>' +
  art(660, 189, 87, 40, ring(698, 234, 8, W) + ring(680, 249, 7.5, W) + line('M667 270q2-12 13-13t13 13M687 246q11-7 18 5l2 6', W, 3) + line('M778 257l17-16 17 16', W, 3.6) + line('M844 241h7l9-9v33l-9-9h-7zM869 242l14 14M883 242l-14 14', W, 3)) +
  `<div class="eng">${T(23, 'ENG')}</div><div class="clock">${T(26, '13:00')}${T(57, '18-10-2023')}</div>` +
  art(1209, 189, 57, 40, fill(W, 'M1257 226h48v36h-22l-9 10v-10h-17z') + line('M1266 236h30M1266 244h30M1266 252h20', '#2e1b1c', 3) + '<circle cx="1303" cy="271" r="24" fill="#383838" stroke="#999" stroke-width="2.500"/><text x="1303" y="282" font-size="31" font-weight="600" text-anchor="middle" fill="#fff" stroke="none">1</text>' + line('M1366 189v120', '#8a7c7c', 3)));

define('tableau-desktop', `:host{display:block;width:1366px;height:768px;position:relative;overflow:hidden;background:#f4f4f4}
  .work{display:flex;height:593px}.main{display:flex;flex-direction:column;gap:6px;flex:1;margin-left:6px;min-width:0}
  show-me{position:absolute;left:1158px;top:48px}`,
  `<title-bar></title-bar><menu-bar></menu-bar><tool-bar></tool-bar>
  <div class="work"><data-pane></data-pane><card-column></card-column>
   <div class="main"><shelf-row label="Columns" w="49"></shelf-row>
    <shelf-row label="Rows" w="30"><field-pill style="--pill:#4996b2;width:148px;margin-left:2px">${T(85, 'Business types')}${art(90, 379, 11, 12, box(90, 381, 30, 6, W) + box(90, 393, 18, 6, W) + box(90, 405, 9, 6, W)).replace('<svg', '<svg style="margin-left:30px"')}</field-pill></shelf-row>
    <viz-sheet></viz-sheet></div></div>
  <sheet-tabs></sheet-tabs><status-bar></status-bar><task-bar></task-bar><show-me></show-me>`);
</script>
</body>
</html>
